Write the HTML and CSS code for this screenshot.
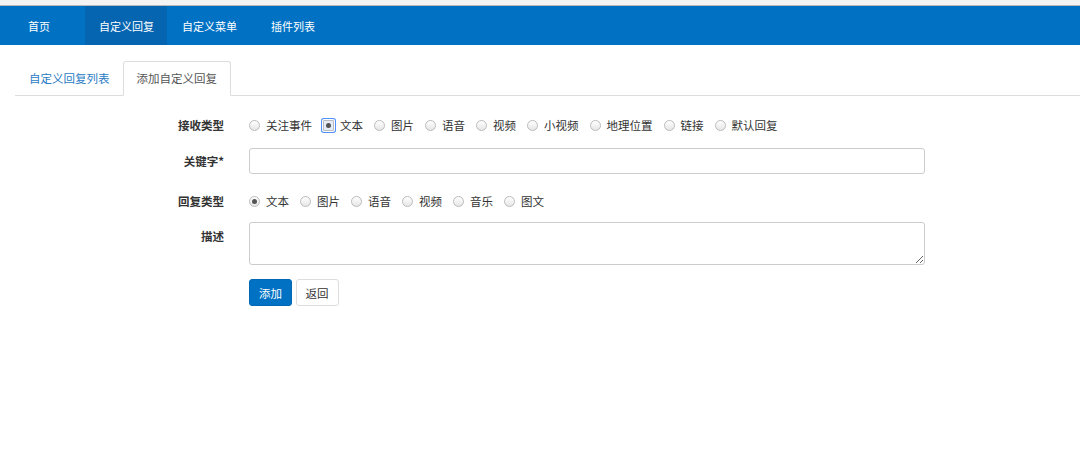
FILE: index.html
```html
<!DOCTYPE html>
<html lang="zh-CN">
<head>
    <meta charset="UTF-8">
    <title>自定义回复</title>
    <link rel="stylesheet" href="styles.css">
</head>
<body>
    <div class="topbar"></div>
    <div class="navbar">
        <a class="brand" href="#">首页</a>
        <a class="nav-item active" href="#">自定义回复</a>
        <a class="nav-item" href="#">自定义菜单</a>
        <a class="nav-item" href="#">插件列表</a>
    </div>
    <div class="content">
        <ul class="tabs">
            <li><a href="#">自定义回复列表</a></li>
            <li class="active"><a href="#">添加自定义回复</a></li>
        </ul>
        <form class="form">
            <div class="row">
                <label class="label">接收类型</label>
                <div class="field radios">
                    <span class="radio"></span><span class="opt">关注事件</span>
                    <span class="radio checked focus"></span><span class="opt">文本</span>
                    <span class="radio"></span><span class="opt">图片</span>
                    <span class="radio"></span><span class="opt">语音</span>
                    <span class="radio"></span><span class="opt">视频</span>
                    <span class="radio"></span><span class="opt">小视频</span>
                    <span class="radio"></span><span class="opt">地理位置</span>
                    <span class="radio"></span><span class="opt">链接</span>
                    <span class="radio"></span><span class="opt">默认回复</span>
                </div>
            </div>
            <div class="row row-input">
                <label class="label">关键字*</label>
                <div class="field"><input type="text" class="input"></div>
            </div>
            <div class="row row-reply">
                <label class="label">回复类型</label>
                <div class="field radios">
                    <span class="radio checked"></span><span class="opt">文本</span>
                    <span class="radio"></span><span class="opt">图片</span>
                    <span class="radio"></span><span class="opt">语音</span>
                    <span class="radio"></span><span class="opt">视频</span>
                    <span class="radio"></span><span class="opt">音乐</span>
                    <span class="radio"></span><span class="opt">图文</span>
                </div>
            </div>
            <div class="row row-text">
                <label class="label">描述</label>
                <div class="field"><textarea class="textarea"></textarea></div>
            </div>
            <div class="row row-btns">
                <span class="label"></span>
                <div class="field">
                    <button type="button" class="btn btn-primary">添加</button>
                    <button type="button" class="btn">返回</button>
                </div>
            </div>
        </form>
    </div>
</body>
</html>
```

FILE: styles.css
```css
body {
    margin: 0;
    font-family: "Noto Sans CJK SC", "Liberation Sans", sans-serif;
    font-size: 11.5px;
    color: #333;
    background: #fff;
}
a {
    text-decoration: none;
}
.topbar {
    height: 5px;
    background: #f4f4f4;
    border-bottom: 1px solid #b9b9b9;
}
.navbar {
    display: flex;
    height: 39px;
    background: #0071c3;
    padding-left: 14px;
    font-size: 11px;
}
.navbar a {
    display: flex;
    align-items: center;
    padding: 0 14px;
    color: #fff;
}
.navbar .brand {
    margin-right: 21px;
}
.navbar .active {
    background: #0565b1;
    padding: 0 13px 0 14px;
}
.navbar .active + a {
    padding-left: 15px;
}
.navbar a:last-child {
    margin-left: 6px;
}
.content {
    padding: 16px 0 0 15px;
}
.tabs {
    display: flex;
    list-style: none;
    margin: 0;
    padding: 0;
    border-bottom: 1px solid #ddd;
}
.tabs li {
    margin-bottom: -1px;
}
.tabs a {
    display: block;
    height: 33px;
    line-height: 33px;
    padding: 0 13px;
    color: #2a7cc4;
    border: 1px solid transparent;
    border-radius: 3px 3px 0 0;
}
.tabs li:first-child a {
    padding-right: 12px;
}
.tabs .active a {
    color: #555;
    background: #fff;
    border-color: #ddd;
    border-bottom-color: #fff;
}
.form {
    padding-top: 16px;
}
.row {
    display: flex;
    align-items: center;
}
.label {
    width: 64px;
    margin-left: 145px;
    padding-right: 25px;
    text-align: right;
    font-weight: bold;
    flex-shrink: 0;
}
.field {
    width: 676px;
}
.radios {
    display: flex;
    align-items: center;
    height: 26px;
}
.radio {
    width: 9px;
    height: 9px;
    border: 1px solid #bbb;
    border-radius: 50%;
    background: linear-gradient(#fff, #e6e6e6);
    margin-right: 6px;
    position: relative;
}
.radio.checked::after {
    content: "";
    position: absolute;
    left: 2px;
    top: 2px;
    width: 5px;
    height: 5px;
    border-radius: 50%;
    background: #555;
}
.radio.focus {
    box-shadow: 0 0 0 1px #fff, 0 0 0 2px #4d90fe;
    border-radius: 1px;
    background: #e3ecf8;
}
.opt {
    margin-right: 11px;
}
.row-input {
    margin-top: 10px;
}
.input {
    display: block;
    box-sizing: border-box;
    width: 676px;
    height: 26px;
    border: 1px solid #ccc;
    border-radius: 3px;
    margin: 0;
}
.row-reply {
    margin-top: 14px;
}
.row-text {
    margin-top: 8px;
    align-items: flex-start;
}
.row-text .label {
    padding-top: 6px;
}
.textarea {
    display: block;
    box-sizing: border-box;
    width: 676px;
    height: 43px;
    border: 1px solid #ccc;
    border-radius: 3px;
    margin: 0;
    font-family: inherit;
}
.row-btns {
    margin-top: 14px;
}
.btn {
    height: 27px;
    padding: 0 9px;
    font-family: inherit;
    font-size: 11.5px;
    color: #333;
    background: #fff;
    border: 1px solid #ddd;
    border-radius: 3px;
    margin-right: 1px;
}
.btn-primary {
    color: #fff;
    background: #0071c3;
    border-color: #0068b5;
}
```
